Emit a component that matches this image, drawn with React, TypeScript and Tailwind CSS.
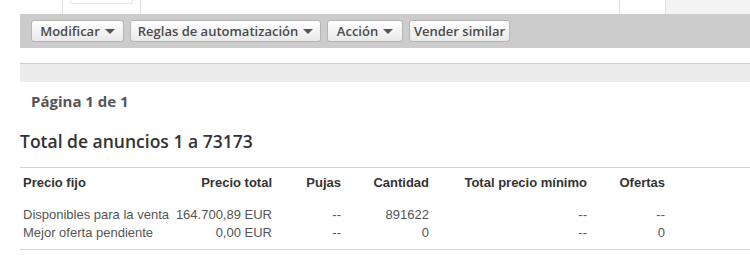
import React from 'react';

const buttons = [
  { label: 'Modificar', caret: true, w: 'w-[93px]' },
  { label: 'Reglas de automatización', caret: true, w: 'w-[191px]' },
  { label: 'Acción', caret: true, w: 'w-[76px]' },
  { label: 'Vender similar', caret: false, w: 'w-[101px]' },
];

const rows = [
  ['Disponibles para la venta', '164.700,89 EUR', '--', '891622', '--', '--'],
  ['Mejor oferta pendiente', '0,00 EUR', '--', '0', '--', '0'],
];

const headers = ['Precio fijo', 'Precio total', 'Pujas', 'Cantidad', 'Total precio mínimo', 'Ofertas'];

const grid = 'grid grid-cols-[155px_100px_69px_88px_158px_78px_1fr]';

function Caret() {
  return <span className="ml-[5px] inline-block h-0 w-0 border-x-[5px] border-t-[5px] border-x-transparent border-t-[#555] align-middle" />;
}

export default function App() {
  return (
    <div className="h-[258px] w-[750px] overflow-hidden bg-white font-['Open_Sans',sans-serif]">
      <div className="flex h-[14px]">
        <div className="w-[62px]" />
        <div className="w-[79px] border-x border-[#ddd] px-[7px]">
          <div className="h-[4px] rounded-b-[3px] border-x border-b border-[#f4dede]" />
        </div>
        <div className="w-[478px]" />
        <div className="w-[46px] border-l border-[#ddd]" />
        <div className="flex-1 border-l border-[#ddd] bg-[#f3f3f3]" />
      </div>

      <div className="ml-[20px] flex h-[34px] items-center gap-[6px] bg-[#cccccc] pl-[11px]">
        {buttons.map((b) => (
          <div
            key={b.label}
            className={`${b.w} flex h-[22px] items-center justify-center rounded-[3px] border border-[#b5b5b5] bg-gradient-to-b from-white to-[#e9e9e9] text-[13px] leading-none font-semibold text-[#4a4a4a]`}
          >
            {b.label}
            {b.caret && <Caret />}
          </div>
        ))}
      </div>

      <div className="ml-[20px] mt-[15px] h-[19px] border-t border-[#cfcfcf] bg-[#ececec]" />

      <div className="pl-[31px] pt-[10px] text-[15px] leading-[18px] font-bold text-[#555]">Página 1 de 1</div>

      <div className="pl-[20px] pt-[20px] text-[17.5px] leading-[22px] font-semibold text-[#333]">Total de anuncios 1 a 73173</div>

      <div className="ml-[20px] mt-[15px] border-y border-[#d4d4d4] font-['Liberation_Sans',Arial,sans-serif] text-[13px]">
        <div className={`${grid} h-[30px] items-center leading-[16px] font-bold text-[#333]`}>
          {headers.map((h, i) => (
            <div key={h} className={i === 0 ? 'pl-[3px]' : 'pr-[3px] text-right'}>
              {h}
            </div>
          ))}
        </div>
        <div className="pt-[8px] pb-[7px] text-[#555]">
          {rows.map((r) => (
            <div key={r[0]} className={`${grid} h-[18px] items-center leading-[18px]`}>
              {r.map((c, i) => (
                <div key={i} className={i === 0 ? 'pl-[3px]' : 'pr-[3px] text-right'}>
                  {c}
                </div>
              ))}
            </div>
          ))}
        </div>
      </div>
    </div>
  );
}
